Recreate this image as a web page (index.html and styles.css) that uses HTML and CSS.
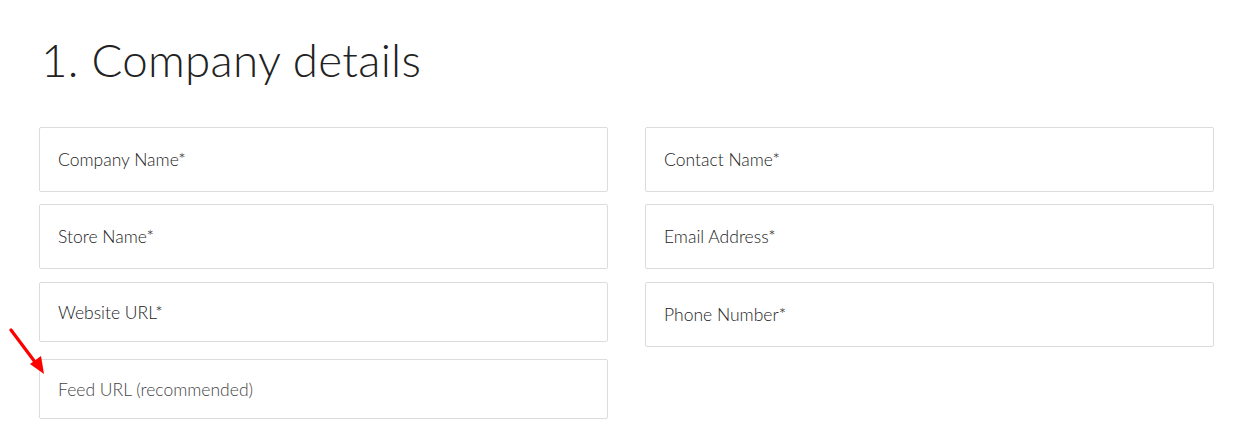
FILE: index.html
```html
<!DOCTYPE html>
<html lang="en">
<head>
  <meta charset="UTF-8" />
  <title>Company details</title>
  <link rel="stylesheet" href="styles.css">
</head>
<body>
  <div class="page">
    <h1>1. Company details</h1>

    <form class="details-form">
      <div class="column">
        <input type="text" class="field" placeholder="Company Name*" />
        <input type="text" class="field" placeholder="Store Name*" />
        <input type="text" class="field field-short" placeholder="Website URL*" />
        <div class="feed-wrap">
          <input type="text" class="field field-short field-light" placeholder="Feed URL (recommended)" />
          <svg class="arrow" width="40" height="50" viewBox="0 0 40 50">
            <line x1="3" y1="2" x2="30" y2="38" stroke="#f00" stroke-width="3.2" stroke-linecap="round"/>
            <polygon points="36,46 22,36 33,28" fill="#f00"/>
          </svg>
        </div>
      </div>

      <div class="column">
        <input type="text" class="field" placeholder="Contact Name*" />
        <input type="email" class="field" placeholder="Email Address*" />
        <input type="tel" class="field" placeholder="Phone Number*" />
      </div>
    </form>
  </div>
</body>
</html>
```

FILE: styles.css
```css
html, body {
  margin: 0;
  padding: 0;
  background: #fff;
  font-family: 'Lato', 'Open Sans', sans-serif;
  color: #222;
}

.page {
  padding: 0 26px 0 39px;
}

h1 {
  font-size: 45.7px;
  font-weight: 300;
  margin: 0;
  padding: 32px 0 0 2px;
  line-height: 55px;
  letter-spacing: 0.3px;
}

.details-form {
  display: grid;
  grid-template-columns: 569px 569px;
  column-gap: 37px;
  margin-top: 40px;
}

.column {
  display: flex;
  flex-direction: column;
  gap: 12px;
}

.column > :nth-child(3) {
  margin-top: 1px;
}

.field {
  box-sizing: border-box;
  height: 65px;
  width: 100%;
  padding: 0 18px;
  font-family: 'Lato', sans-serif;
  font-weight: 300;
  font-size: 17.5px;
  color: #222;
  background: #fff;
  border: 1px solid #dcdcdc;
  border-radius: 2px;
  outline: none;
}

.field::placeholder {
  color: #222;
  opacity: 1;
}

.field-short {
  height: 60px;
}

.field-light::placeholder {
  color: #444;
}

.feed-wrap {
  position: relative;
  margin-top: 5px;
}

.arrow {
  position: absolute;
  left: -31px;
  top: -31px;
}
```
